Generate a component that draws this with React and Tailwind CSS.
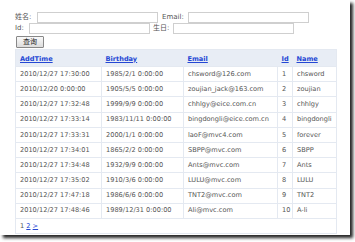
import React from "react";

const rows = [
  ["2010/12/27 17:30:00", "1985/2/1 0:00:00", "chsword@126.com", "1", "chsword"],
  ["2010/12/20 0:00:00", "1905/5/5 0:00:00", "zoujian_jack@163.com", "2", "zoujian"],
  ["2010/12/27 17:32:48", "1999/9/9 0:00:00", "chhlgy@eice.com.cn", "3", "chhlgy"],
  ["2010/12/27 17:33:14", "1983/11/11 0:00:00", "bingdongli@eice.com.cn", "4", "bingdongli"],
  ["2010/12/27 17:33:31", "2000/1/1 0:00:00", "laoF@mvc4.com", "5", "forever"],
  ["2010/12/27 17:34:01", "1865/2/2 0:00:00", "SBPP@mvc.com", "6", "SBPP"],
  ["2010/12/27 17:34:48", "1932/9/9 0:00:00", "Ants@mvc.com", "7", "Ants"],
  ["2010/12/27 17:35:02", "1910/3/6 0:00:00", "LULU@mvc.com", "8", "LULU"],
  ["2010/12/27 17:47:18", "1986/6/6 0:00:00", "TNT2@mvc.com", "9", "TNT2"],
  ["2010/12/27 17:48:46", "1989/12/31 0:00:00", "Ali@mvc.com", "10", "A-li"],
];

const headers = ["AddTime", "Birthday", "Email", "Id", "Name"];
const widths = ["w-[86px]", "w-[82px]", "w-[94px]", "w-[15px]", "w-[44px]"];

function Field({ label, labelW }) {
  return (
    <div className="flex items-center">
      <span className={`${labelW} text-[7px]`}>{label}</span>
      <input className="w-[121px] h-[11px] border border-[#cfcfcf] bg-white" />
    </div>
  );
}

export default function App() {
  return (
    <div className="w-[355px] h-[242px] bg-white">
      <div
        className="w-[350px] h-[235px] bg-white shadow-[3px_3px_3px_rgba(0,0,0,0.85)] pt-[12px] pl-[15px] text-[#555] text-[6.6px] leading-none"
        style={{ fontFamily: '"DejaVu Sans", "Noto Sans CJK SC", sans-serif' }}
      >
        {/* search form */}
        <div className="flex gap-[4px]">
          <Field label="姓名:" labelW="w-[22px]" />
          <Field label="Email:" labelW="w-[26px]" />
        </div>
        <div className="flex gap-[3px]">
          <Field label="Id:" labelW="w-[14px]" />
          <Field label="生日:" labelW="w-[20px]" />
        </div>
        <button className="mt-[2px] ml-[1px] w-[28px] h-[12px] border border-[#888] rounded-[1px] bg-gradient-to-b from-[#fafafa] to-[#dcdcdc] text-[#222] text-[7px] leading-none">
          查询
        </button>

        {/* list */}
        <table className="table-fixed border-collapse mt-[1px] w-[321px] border border-[#e4e9f1]">
          <thead>
            <tr className="bg-[#e8edf5] h-[17px]">
              {headers.map((h, i) => (
                <th key={h} className={`${widths[i]} text-left font-bold px-[4px] pt-[2px]`}>
                  <a className="text-[#2447d4] underline">{h}</a>
                </th>
              ))}
            </tr>
          </thead>
          <tbody>
            {rows.map((r) => (
              <tr key={r[3]} className="h-[15.2px]">
                {r.map((c, i) => (
                  <td
                    key={i}
                    className="border border-[#e4e9f1] px-[4px] whitespace-nowrap overflow-visible"
                  >
                    {c}
                  </td>
                ))}
              </tr>
            ))}
            <tr className="h-[15px]">
              <td colSpan={5} className="px-[4px] border border-[#e4e9f1]">
                1 <a className="text-[#2447d4] underline">2</a>{" "}
                <a className="text-[#2447d4] underline">&gt;</a>
              </td>
            </tr>
          </tbody>
        </table>
      </div>
    </div>
  );
}
